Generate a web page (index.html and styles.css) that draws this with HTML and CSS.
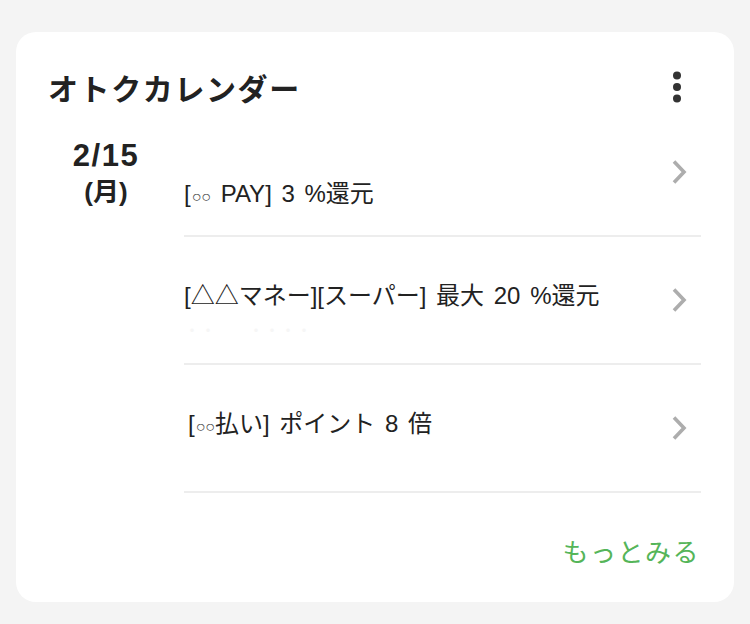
FILE: index.html
```html
<!DOCTYPE html>
<html lang="ja">
<head>
<meta charset="utf-8">
<title>オトクカレンダー</title>
<link rel="stylesheet" href="styles.css">
</head>
<body>
<section class="card">
  <header class="card-header">
    <h1 class="title">オトクカレンダー</h1>
    <button class="menu" aria-label="メニュー">
      <svg width="10" height="32" viewBox="0 0 10 32"><circle cx="5" cy="4.5" r="4" fill="#333"/><circle cx="5" cy="16" r="4" fill="#333"/><circle cx="5" cy="27.5" r="4" fill="#333"/></svg>
    </button>
  </header>
  <div class="day">
    <div class="date">
      <div class="date-num">2/15</div>
      <div class="date-wd">(月)</div>
    </div>
    <ul class="list">
      <li class="row row-first">
        <div class="row-body"><p class="row-title">[<span class="sym">○○</span> PAY] 3 %還元</p></div>
        <svg class="chev" width="16" height="26" viewBox="0 0 16 26"><polyline points="3,2.5 13,13 3,23.5" fill="none" stroke="#adadad" stroke-width="3.6"/></svg>
      </li>
      <li class="row">
        <div class="row-body"><p class="row-title">[△△マネー][スーパー] 最大 20 %還元</p><p class="row-sub">・・　　・・・・</p></div>
        <svg class="chev" width="16" height="26" viewBox="0 0 16 26"><polyline points="3,2.5 13,13 3,23.5" fill="none" stroke="#adadad" stroke-width="3.6"/></svg>
      </li>
      <li class="row">
        <div class="row-body"><p class="row-title row-title-ind">[<span class="sym">○○</span>払い] ポイント 8 倍</p></div>
        <svg class="chev" width="16" height="26" viewBox="0 0 16 26"><polyline points="3,2.5 13,13 3,23.5" fill="none" stroke="#adadad" stroke-width="3.6"/></svg>
      </li>
    </ul>
  </div>
  <footer class="card-footer">
    <a class="more" href="#">もっとみる</a>
  </footer>
</section>
</body>
</html>
```
FILE: styles.css
```css
* { box-sizing: border-box; }
html, body { margin: 0; padding: 0; }
body {
  background: #f4f4f4;
  font-family: "Liberation Sans", "Noto Sans CJK JP", sans-serif;
  color: #222;
  width: 750px;
  height: 624px;
  overflow: hidden;
}
.card {
  margin: 32px 16px 0;
  width: 718px;
  height: 570px;
  background: #fff;
  border-radius: 20px;
  display: flex;
  flex-direction: column;
}
.card-header {
  display: flex;
  align-items: center;
  justify-content: space-between;
  padding: 38px 52px 5px 32px;
}
.title {
  margin: 0;
  font-family: "Noto Sans CJK JP", sans-serif;
  font-weight: 700;
  font-size: 30px;
  line-height: 34px;
  letter-spacing: 1.6px;
  color: #222;
}
.menu {
  border: 0;
  background: none;
  padding: 0;
  width: 10px;
  height: 32px;
  display: block;
}
.menu svg { display: block; }
.day {
  display: flex;
}
.date {
  width: 168px;
  flex: none;
  padding: 32px 0 0 12px;
  display: flex;
  flex-direction: column;
  align-items: center;
  font-weight: 700;
}
.date-num {
  font-size: 31px;
  line-height: 30px;
  letter-spacing: 1.5px;
}
.date-wd {
  margin-top: 7px;
  font-size: 26px;
  line-height: 28px;
}
.list {
  list-style: none;
  margin: 0;
  padding: 0;
  width: 517px;
}
.row {
  display: flex;
  align-items: center;
  justify-content: space-between;
  height: 128px;
  border-bottom: 2px solid #ededed;
}
.row-body {
  align-self: flex-start;
  padding-top: 43px;
}
.row-first .row-body { padding-top: 69px; }
.row-title {
  margin: 0;
  font-size: 24px;
  line-height: 32px;
  word-spacing: 3px;
  color: #222;
}
.row-title-ind { padding-left: 4px; }
.sym {
  font-family: "Liberation Sans", sans-serif;
  font-size: 16px;
  margin: 0 0 0 1px;
  vertical-align: 0;
  word-spacing: 0;
  color: #444;
}
.row-sub {
  margin: 8px 0 0;
  font-size: 16px;
  line-height: 22px;
  color: #f6f6f6;
}
.chev {
  display: block;
  margin-right: 14px;
}
.card-footer {
  display: flex;
  justify-content: flex-end;
  padding: 40px 34px 0 0;
}
.more {
  font-family: "Noto Sans CJK JP", sans-serif;
  font-weight: 400;
  font-size: 26px;
  line-height: 36px;
  color: #55b559;
  text-decoration: none;
  letter-spacing: 1.5px;
}
```
